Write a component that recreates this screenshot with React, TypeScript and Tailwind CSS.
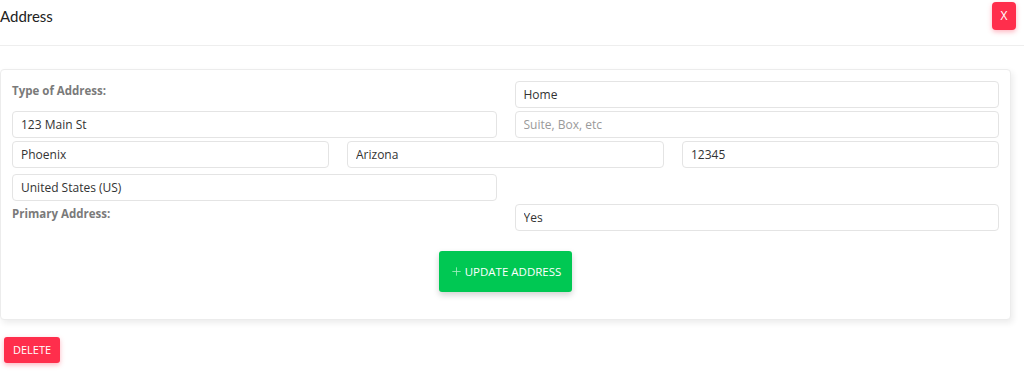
import { Plus } from 'lucide-react'

const inputClass =
  'h-[27px] w-full rounded-[4px] border border-[#e4e4e4] bg-white px-[8px] text-[12px] text-[#333] outline-none placeholder:text-[#9a9a9a]'

function Field({ value, placeholder }: { value?: string; placeholder?: string }) {
  return <input className={inputClass} defaultValue={value} placeholder={placeholder} readOnly />
}

export default function App() {
  return (
    <div className="min-h-[374px] bg-white text-[#333]" style={{ fontFamily: '"Open Sans", sans-serif' }}>
      <div className="flex h-[46px] items-start justify-between border-b border-[#eeeeee] pr-[8px]">
        <h2 className="mt-[6px] text-[15px] leading-[20px] text-[#222]" style={{ fontFamily: 'Lato, sans-serif' }}>
          Address
        </h2>
        <button
          type="button"
          className="mt-[2px] h-[28px] w-[24px] rounded-[4px] bg-[#ff2e4c] text-[12px] text-white shadow-[0_2px_5px_rgba(255,46,76,0.35)]"
        >
          X
        </button>
      </div>

      <div className="mt-[23px] mr-[13px] rounded-[4px] border border-[#ececec] bg-white px-[11px] pt-[11px] pb-[27px] shadow-[2px_3px_6px_rgba(0,0,0,0.08)]">
        <div className="grid grid-cols-2 gap-x-[18px]">
          <label className="pt-[1px] text-[11.5px] font-bold text-[#7a7a7a]">Type of Address:</label>
          <Field value="Home" />
        </div>
        <div className="mt-[3px] grid grid-cols-2 gap-x-[18px]">
          <Field value="123 Main St" />
          <Field placeholder="Suite, Box, etc" />
        </div>
        <div className="mt-[3px] grid grid-cols-3 gap-x-[18px]">
          <Field value="Phoenix" />
          <Field value="Arizona" />
          <Field value="12345" />
        </div>
        <div className="mt-[6px] grid grid-cols-2 gap-x-[18px]">
          <Field value="United States (US)" />
        </div>
        <div className="mt-[3px] grid grid-cols-2 gap-x-[18px]">
          <label className="pt-[1px] text-[11.5px] font-bold text-[#7a7a7a]">Primary Address:</label>
          <Field value="Yes" />
        </div>
        <div className="mt-[20px] flex justify-center">
          <button
            type="button"
            className="flex h-[41px] items-center gap-[2px] rounded-[3px] bg-[#00c853] px-[11px] text-[11.5px] text-white shadow-[0_3px_6px_rgba(0,0,0,0.18)]"
          >
            <Plus size={13} strokeWidth={1.5} className="text-[#a6eec4]" />
            UPDATE ADDRESS
          </button>
        </div>
      </div>

      <div className="mt-[16px] pl-[4px]">
        <button
          type="button"
          className="h-[26px] rounded-[3px] bg-[#ff2e4c] px-[9px] text-[11px] text-white shadow-[0_2px_5px_rgba(255,46,76,0.35)]"
        >
          DELETE
        </button>
      </div>
    </div>
  )
}
